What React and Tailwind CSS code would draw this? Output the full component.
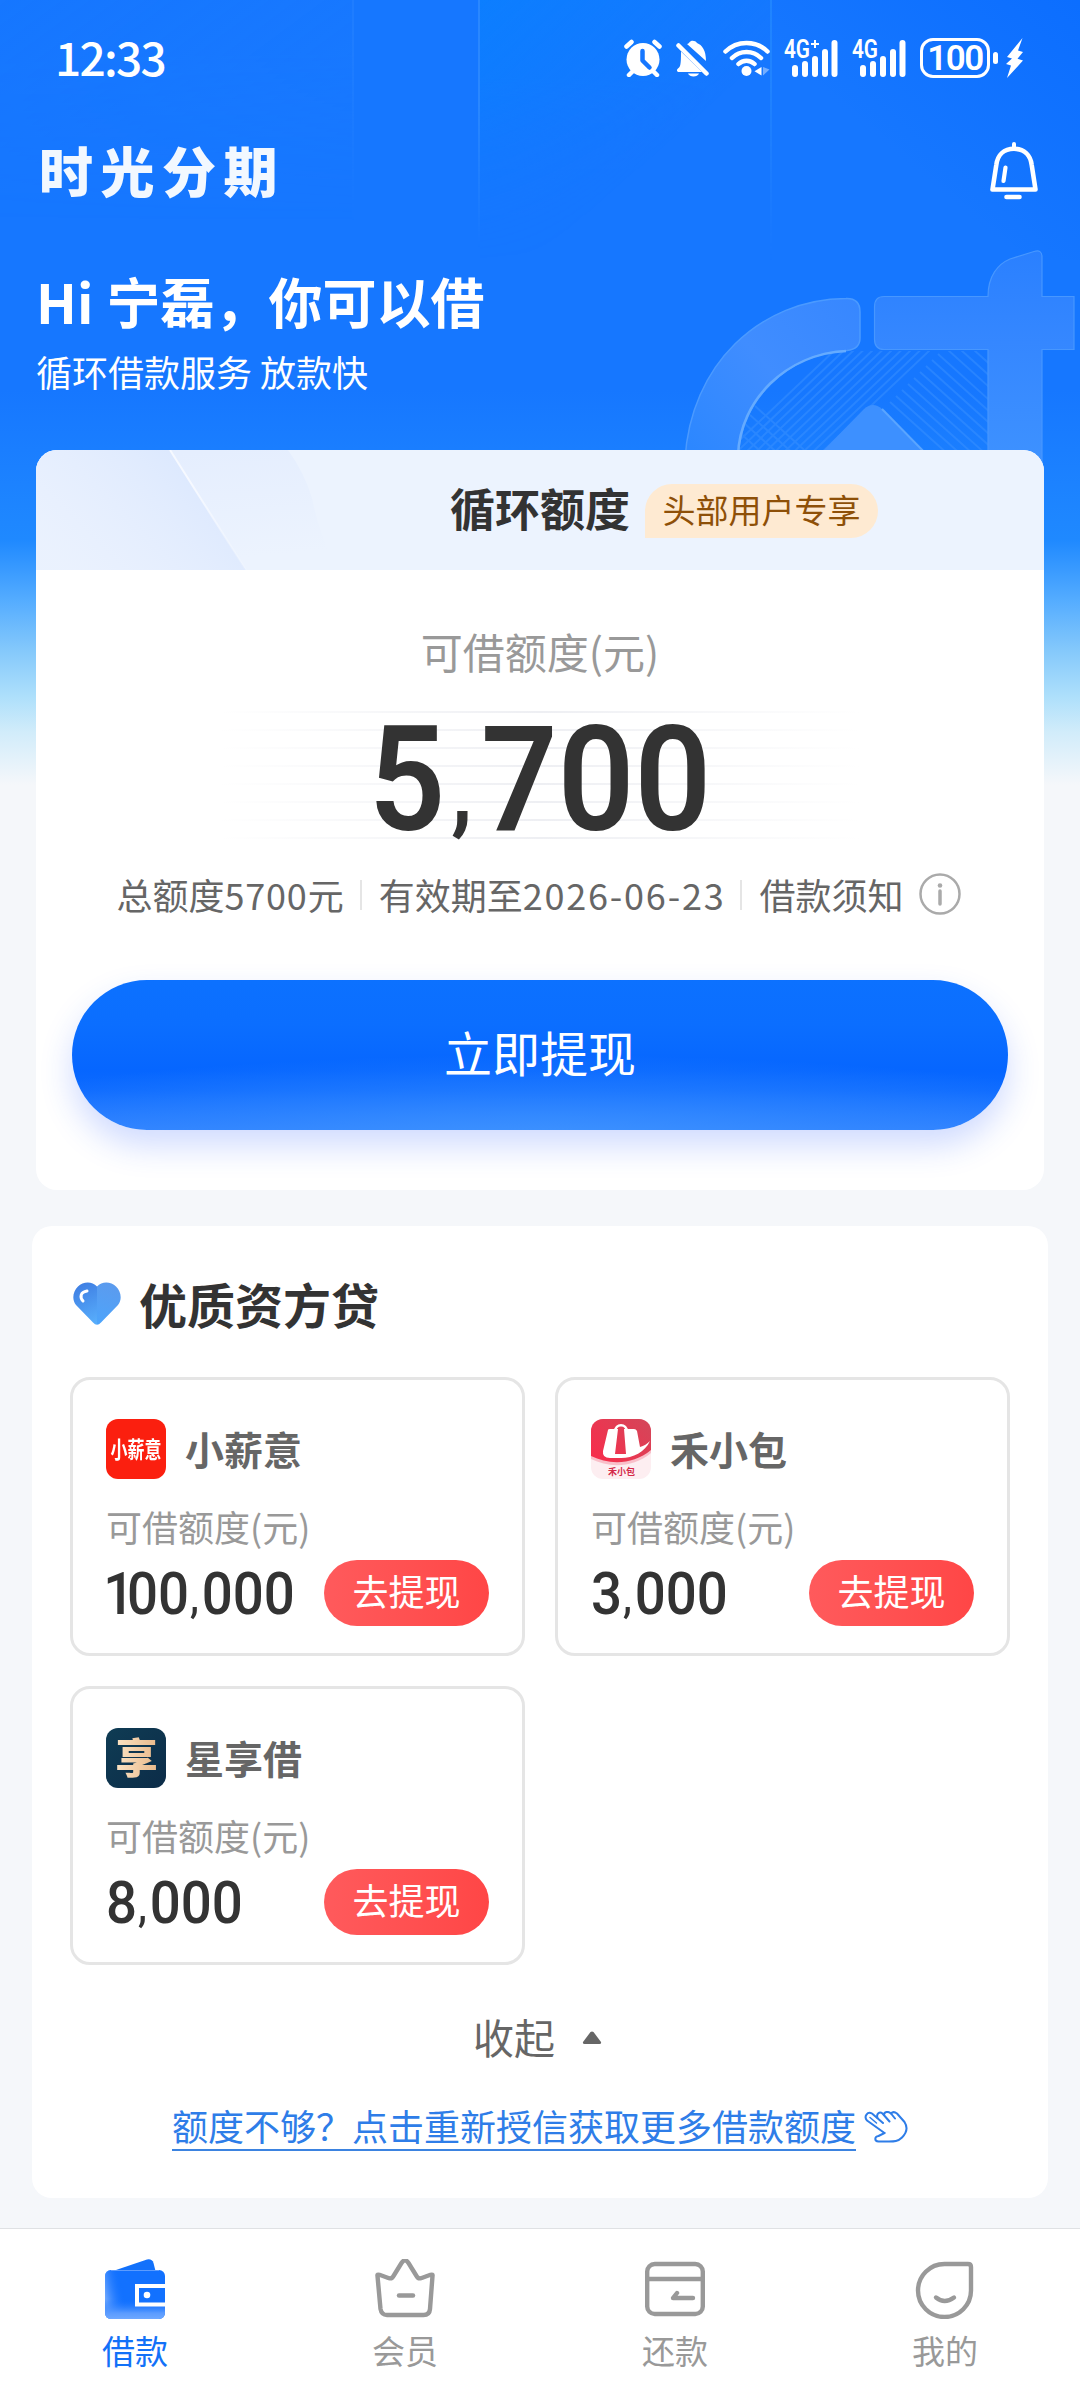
const LENDERS = [
  { id: "xxy", name: "小薪意", amount: "100,000", Logo: XiaoxinyiLogo },
  { id: "hxb", name: "禾小包", amount: "3,000", Logo: HexiaobaoLogo },
  { id: "xxj", name: "星享借", amount: "8,000", Logo: XingxiangjieLogo },
];

const TABS = [
  { label: "借款", Icon: WalletIcon, active: true },
  { label: "会员", Icon: CrownIcon },
  { label: "还款", Icon: RepayIcon },
  { label: "我的", Icon: FaceIcon },
];

// ---------- status bar ----------

function AlarmIcon() {
  return (
    <svg width="38" height="38" viewBox="0 0 38 38" fill="none">
      <circle cx="19" cy="20.5" r="16.5" fill="#fff" />
      <path d="M2.5 7.5 7.5 3M35.5 7.5 30.5 3M5 36l4-4M33 36l-4-4" stroke="#fff" strokeWidth="4.5" strokeLinecap="round" />
      <path d="M18.5 12v9.5l7 7" stroke="#1677ff" strokeWidth="4.5" strokeLinecap="round" strokeLinejoin="round" />
    </svg>
  );
}

function BellOffIcon() {
  return (
    <svg width="33" height="38" viewBox="0 0 33 38" fill="none">
      <path d="M11 5c1.5-.6 2-1 2.5-1.8C14.5 1 19.5 1 21 4c5 2 9 7 9 18z" fill="#fff" />
      <path d="M5 12.5 26 33H3c-2.5 0-2.5-2.5-1-3.5 2.5-1.8 3-4 3-17z" fill="#fff" />
      <path d="M12 34.5h11c-1.5 4-9.5 4-11 0z" fill="#fff" />
      <path d="M2.5 6.5 30.5 34.5" stroke="#fff" strokeWidth="4.5" strokeLinecap="round" />
    </svg>
  );
}

function WifiIcon() {
  return (
    <svg width="47" height="38" viewBox="0 0 47 38" fill="none">
      <path d="M2.5 12.5C14 1 33 1 44.5 12.5" stroke="#fff" strokeWidth="4.5" strokeLinecap="round" />
      <path d="M9 19c8-8 21-8 29 0M15.5 25c4.5-4.5 11.5-4.5 16 0" stroke="#fff" strokeWidth="4.5" strokeLinecap="round" />
      <circle cx="23.5" cy="32" r="5" fill="#fff" />
      <path d="M38.5 28v8.5l-7-4.3z" fill="#fff" />
      <path d="M40 28v8.5l6.5-6z" fill="#fff" opacity=".4" />
    </svg>
  );
}

function Signal({ plus }) {
  return (
    <svg className="overflow-visible" width="54" height="38" viewBox="0 0 54 38" fill="#fff">
      <text x="0" y="19" fontFamily="Roboto, sans-serif" fontWeight="600" fontSize="25" textLength="26" lengthAdjust="spacingAndGlyphs">
        4G
      </text>
      {plus && <path d="M30 1h2v3h3v2h-3v3h-2V6h-3V4h3z" />}
      <rect x="8" y="26" width="6" height="12" rx="3" />
      <rect x="18" y="22" width="6" height="16" rx="3" />
      <rect x="28" y="17" width="6" height="21" rx="3" />
      <rect x="38" y="10" width="6" height="28" rx="3" />
      <rect x="47.5" y="1" width="6" height="37" rx="3" />
    </svg>
  );
}

function Battery() {
  return (
    <div className="flex items-center gap-[3px]">
      <div className="flex h-10 w-[70px] items-center justify-center rounded-[13px] border-[3px] border-white font-['Roboto',sans-serif] text-[35px] leading-none font-semibold tracking-[-1.5px]">
        100
      </div>
      <div className="h-3 w-[5px] rounded-full bg-white" />
      <svg className="ml-[5px]" width="17" height="40" viewBox="0 0 17 40" fill="#fff">
        <path d="M16.5 0 1 19l5 1.5L0 26l5 1.5L1 40l16-17.5-5.5-1.8L17 14l-5-1.5z" />
      </svg>
    </div>
  );
}

function StatusBar() {
  return (
    <div className="flex h-[116px] items-center justify-between pr-[57px] pl-[55px]">
      <span className="pb-[5px] font-['Noto_Sans_CJK_SC',sans-serif] text-[46px] leading-none font-medium tracking-[-1.7px]">12:33</span>
      <div className="flex items-center gap-[14px]">
        <AlarmIcon />
        <BellOffIcon />
        <WifiIcon />
        <Signal plus />
        <Signal />
        <Battery />
      </div>
    </div>
  );
}

// ---------- header ----------

function NoticeIcon() {
  return (
    <svg width="48" height="58" viewBox="0 0 48 58" fill="none" stroke="#fff" strokeLinecap="round" strokeLinejoin="round">
      <path d="M24 2v4" strokeWidth="4" />
      <path d="M24 6.8C14 6.8 7.5 13 6.3 23L2.5 47.5h43L41.7 23C40.5 13 34 6.8 24 6.8z" strokeWidth="4.6" />
      <path d="M15.5 25.5 13.5 39" strokeWidth="4.2" />
      <path d="M16.5 55h13" strokeWidth="4.6" />
    </svg>
  );
}

function HeaderBackdrop() {
  // hatching inside the bowl: rises up to the ridge line, falls to the right of it
  const rising = Array.from({ length: 11 }, (_, i) => 930 - i * 9.5);
  const ridge = Array.from({ length: 9 }, (_, i) => i * 6);
  return (
    <div className="absolute inset-x-0 top-0 h-[790px] bg-[linear-gradient(180deg,#1677ff_0px,#1677ff_390px,#1a7eff_450px,#1f89ff_540px,#54acff_600px,#82c7fb_648px,#afe0fb_698px,#d1ecfa_732px,#f5f7fa_785px)]">
      <div className="flex h-[260px]">
        <div className="w-[354px] border-r-2 border-[#2c86ff]/40 bg-linear-to-br from-transparent to-[#2584ff]/20 mask-b-from-20% mask-b-to-85%" />
        <div className="w-[126px] border-r-2 border-[#3d97ff]/50 mask-b-from-40% mask-b-to-95%" />
        <div className="w-[292px] border-r-2 border-[#338cff]/50 bg-linear-to-br from-[#0a80ff]/80 to-transparent to-60% mask-b-from-30% mask-b-to-100%" />
        <div className="flex-1 bg-linear-to-bl from-[#0568ff]/60 to-transparent to-60%" />
      </div>
      <svg className="absolute top-0 left-0" width="1080" height="560" viewBox="0 0 1080 560" fill="none">
        <defs>
          <clipPath id="bowl">
            <path d="M738 460A112 110 0 0 1 850 351H988V460z" />
          </clipPath>
          <linearGradient id="arc" x1="860" y1="300" x2="690" y2="450" gradientUnits="userSpaceOnUse">
            <stop stopColor="#3787ff" />
            <stop offset=".5" stopColor="#408dff" />
            <stop offset="1" stopColor="#2c87ff" />
          </linearGradient>
          <linearGradient id="stem" x1="0" y1="250" x2="0" y2="480" gradientUnits="userSpaceOnUse">
            <stop stopColor="#2a80ff" />
            <stop offset=".4" stopColor="#3587ff" />
            <stop offset="1" stopColor="#3f93ff" />
          </linearGradient>
        </defs>
        <g clipPath="url(#bowl)" stroke="#3b91ff" strokeWidth="2" opacity=".5">
          {rising.map((x) => (
            <path key={x} d={`M${x} 350l-110 104`} />
          ))}
          {ridge.map((d) => (
            <path key={d} d={`M${938 - d} ${354 + d}l120 108`} />
          ))}
          {[0, 1, 2].map((n) => (
            <path key={n} d={`M${948 + n * 13} 350l80 72`} />
          ))}
          {[0, 1, 2, 3].map((n) => (
            <path key={n} d={`M${755 - n * 5} ${406 + n * 9}l56 50`} />
          ))}
        </g>
        <path d="M685 460C690 365 760 299 846 298.5Q860 298 860 312V338Q860 349 847 350.5C786 354 740 400 738 460z" fill="url(#arc)" stroke="#4b9aff" strokeWidth="1.5" />
        <path d="M846 351C786 354 740 400 738 455" stroke="#65abff" strokeWidth="2.5" />
        <path d="M884 296.5H988C988 276 998 264 1010 259L1034 251.5Q1042 249 1042 257V296.5H1074V349.5H1042V480H988V349.5H884Q874.5 349.5 874.5 339V307Q874.5 296.5 884 296.5z" fill="url(#stem)" stroke="#4797ff" strokeWidth="1.2" />
        <path d="M814 460 864 409Q873 401 882 409L932 460z" fill="#3d90ff" />
        <path d="M882 409 932 460" stroke="#5aa5ff" strokeWidth="2" />
      </svg>
    </div>
  );
}

// ---------- credit card ----------

function InfoIcon() {
  return (
    <svg width="42" height="42" viewBox="0 0 42 42" fill="none">
      <circle cx="21" cy="21" r="19.5" stroke="#aaa" strokeWidth="2.5" />
      <circle cx="21" cy="12.5" r="2.3" fill="#aaa" />
      <path d="M21 18v13" stroke="#aaa" strokeWidth="3.5" strokeLinecap="round" />
    </svg>
  );
}

function CreditCard() {
  return (
    <section className="mx-9 mt-[50px] h-[740px] overflow-hidden rounded-[21px] bg-white">
      <div className="relative grid h-[120px] grid-cols-[1fr_auto_1fr] items-center bg-[#ecf3fe]">
        <svg className="absolute top-0 left-0" width="320" height="120" viewBox="0 0 320 120">
          <defs>
            <linearGradient id="facetA" x1="20" y1="110" x2="130" y2="0" gradientUnits="userSpaceOnUse">
              <stop stopColor="#e6eefe" stopOpacity=".3" />
              <stop offset="1" stopColor="#dde9fe" />
            </linearGradient>
            <linearGradient id="facetB" x1="190" y1="0" x2="200" y2="120" gradientUnits="userSpaceOnUse">
              <stop stopColor="#e5eefe" />
              <stop offset=".9" stopColor="#ecf3fe" />
            </linearGradient>
            <linearGradient id="facetEdge" x1="134" y1="0" x2="210" y2="120" gradientUnits="userSpaceOnUse">
              <stop offset=".3" stopColor="#f6f9ff" />
              <stop offset="1" stopColor="#f6f9ff" stopOpacity=".2" />
            </linearGradient>
          </defs>
          <path d="M0 0H134L210 120H0z" fill="url(#facetA)" />
          <path d="M134 0H252Q268 22 276 48Q282 80 300 120H210z" fill="url(#facetB)" />
          <path d="M134 0 210 120" stroke="url(#facetEdge)" strokeWidth="2" />
        </svg>
        <span />
        <h2 className="relative pb-[6px] text-[45px] leading-none font-bold">循环额度</h2>
        <span className="relative mt-[2px] ml-[15px] flex h-[54px] w-[233px] items-center justify-center justify-self-start rounded-[27px] rounded-bl-none bg-[#feead2] pb-[3px] text-[33px] leading-none text-[#8e5008]">
          头部用户专享
        </span>
      </div>

      <p className="mt-[51px] text-center text-[42px] leading-[60px] text-[#999]">可借额度(元)</p>

      <div className="relative mx-auto mt-[22px] h-[150px] w-[640px]">
        <div className="absolute inset-x-0 top-[8px] flex flex-col gap-4">
          {[0, 1, 2, 3, 4, 5, 6, 7].map((n) => (
            <div key={n} className="h-[2px] bg-linear-to-r from-transparent via-[#eeeff3] to-transparent" />
          ))}
        </div>
        <div className="relative top-[3px] flex origin-center scale-x-[.92] justify-center font-['Roboto',sans-serif] text-[146px] leading-[150px] font-semibold">
          <span>5</span>
          <span className="translate-y-[8px] pr-[9px] pl-[6px] text-[100px]">,</span>
          <span>700</span>
        </div>
      </div>

      <div className="mt-[14px] flex h-[54px] items-center justify-center pr-[3px] text-[36px] leading-[54px] text-[#666]">
        <span>
          总额度<span className="tracking-[.8px]">5700</span>元
        </span>
        <i className="mt-[2px] mr-[17px] ml-[16px] h-[30px] w-[2px] bg-[#e5e5e5]" />
        <span>
          有效期至<span className="tracking-[1.8px]">2026-06-23</span>
        </span>
        <i className="mt-[2px] mr-[17px] ml-[15px] h-[30px] w-[2px] bg-[#e5e5e5]" />
        <span className="mr-[15px]">借款须知</span>
        <InfoIcon />
      </div>

      <button className="mx-9 mt-[59px] flex h-[150px] w-[936px] items-center justify-center rounded-full bg-[radial-gradient(ellipse_70%_55%_at_50%_105%,rgba(64,150,255,.8)_0%,rgba(56,143,255,.45)_50%,rgba(50,140,255,0)_100%),linear-gradient(180deg,#0c71ff_0%,#0b6eff_30%,#0666ff_60%,#0d6aff_74%,#2f80ff_100%)] pb-[9px] text-[48px] leading-none text-white shadow-[0_16px_32px_rgba(40,90,255,0.22)]">
        立即提现
      </button>
    </section>
  );
}

// ---------- lenders ----------

function HeartIcon() {
  return (
    <svg width="50" height="46" viewBox="0 0 50 46" fill="none">
      <defs>
        <linearGradient id="heartL" x1="6" y1="4" x2="24" y2="42" gradientUnits="userSpaceOnUse">
          <stop stopColor="#3f7fe3" />
          <stop offset="1" stopColor="#58aefc" />
        </linearGradient>
        <linearGradient id="heartR" x1="40" y1="4" x2="26" y2="42" gradientUnits="userSpaceOnUse">
          <stop stopColor="#5b9bee" />
          <stop offset="1" stopColor="#4da4fb" />
        </linearGradient>
      </defs>
      <path d="M25 5.5C20 0 11 .5 6 5.5S-.5 18 4 24L21 41.5Q23 43.8 25 43.8z" fill="url(#heartL)" />
      <path d="M25 5.5C30 0 39 .5 44 5.5S50.5 18 46 24L29 41.5Q27 43.8 25 43.8z" fill="url(#heartR)" />
      <path d="M15 10C8.5 11 7.5 16 11 20" stroke="#fff" strokeWidth="3" strokeLinecap="round" />
    </svg>
  );
}

function XiaoxinyiLogo() {
  return (
    <div className="flex size-[60px] items-center justify-center rounded-[12px] bg-[#fb1f0f]">
      <span className="scale-y-[1.35] pb-[2px] text-[17px] leading-none font-bold text-white">小薪意</span>
    </div>
  );
}

function HexiaobaoLogo() {
  return (
    <svg className="rounded-[12px]" width="60" height="60" viewBox="0 0 60 60">
      <defs>
        <linearGradient id="bagBg" x1="60" y1="0" x2="10" y2="45" gradientUnits="userSpaceOnUse">
          <stop stopColor="#d3475a" />
          <stop offset="1" stopColor="#f62e4c" />
        </linearGradient>
      </defs>
      <rect width="60" height="60" fill="#fdeef1" />
      <path d="M0 0H60V34C42 49 18 49 0 40z" fill="#f9bfc9" />
      <path d="M0 0H60V31C42 46 18 46 0 37z" fill="url(#bagBg)" />
      <path d="M17 11Q17 10 19 10H27L24 35H35L33 10H43Q45 10 46 12L49 28C53 27 56 25 59 22C54 33 42 39 30 39H19Q11 39 12 32z" fill="#fff" />
      <path d="M24 13C24 4 36 4 36 13" fill="none" stroke="#fff" strokeWidth="2.5" />
      <text x="30.5" y="56" textAnchor="middle" fontFamily="'Noto Sans CJK SC', sans-serif" fontSize="9" fontWeight="700" fill="#d42a4a">
        禾小包
      </text>
    </svg>
  );
}

function XingxiangjieLogo() {
  return (
    <div className="flex size-[60px] items-center justify-center rounded-[12px] bg-linear-to-br from-[#0f3c54] to-[#0c2c48]">
      <span className="scale-x-[1.04] bg-linear-to-r from-[#fbe3c4] to-[#e9b98a] bg-clip-text pb-[5px] text-[41px] leading-none font-black text-transparent">享</span>
    </div>
  );
}

function Amount({ value }) {
  return (
    <span className="relative top-px flex w-0 origin-left scale-x-[.91] font-['Roboto',sans-serif] text-[60px] leading-[66px] font-medium whitespace-nowrap">
      {value.split("").map((ch, i) => {
        if (ch === ",") {
          return (
            <span key={i} className="translate-y-[3px] pr-[3px] pl-px text-[44px]">
              ,
            </span>
          );
        }
        // the "1" sits tighter than the other figures
        return (
          <span key={i} className={ch === "1" ? "-ml-[3px] tracking-[-8px]" : undefined}>
            {ch}
          </span>
        );
      })}
    </span>
  );
}

function LenderCard({ name, amount, Logo }) {
  return (
    <div className="h-[279px] rounded-[20px] border-[3px] border-[#e5e5e5] px-[33px] pt-[39px]">
      <div className="flex h-[60px] items-center gap-[19px]">
        <Logo />
        <span className="pb-[3px] text-[39px] leading-[56px] font-bold text-[#666]">{name}</span>
      </div>
      <p className="mt-[23px] text-[36px] leading-[48px] text-[#999]">可借额度(元)</p>
      <div className="mt-[10px] flex items-center justify-between">
        <Amount value={amount} />
        <button className="flex h-[66px] w-[165px] items-center justify-center rounded-full bg-linear-to-r from-[#ff5a5c] to-[#ff4646] pb-[6px] text-[36px] leading-none text-white">
          去提现
        </button>
      </div>
    </div>
  );
}

function HandIcon() {
  return (
    <svg width="44" height="32" viewBox="0 0 44 32" fill="none" stroke="#2e7de8" strokeWidth="2" strokeLinecap="round" strokeLinejoin="round">
      <path d="M20.5 22 3 9.5C-.5 5.5 3.5 0 8 2.5L19 12" />
      <path d="M13.5 7C12 3 15.5 0 18.5 2.5L25.5 10.5" />
      <path d="M20 4C20 .5 24 0 27 2.5L31 7.5" />
      <path d="M27 2.5C28.5.8 31 1 33 2.5L40.5 11C44 16.5 42.5 22 38 26.5 34 30.5 30 30.5 25 30.5H14.5C10 30 10.5 25.5 14.5 25L20.5 22" />
      <path d="M6 6.5 12.5 12" strokeWidth="1.5" />
    </svg>
  );
}

function LenderSection() {
  return (
    <section className="mx-8 mt-9 h-[972px] rounded-[20px] bg-white px-[38px] pt-[42px]">
      <div className="flex h-[72px] items-center pl-[2px]">
        <HeartIcon />
        <h2 className="ml-[17px] pb-[3px] text-[48px] leading-none font-bold">优质资方贷</h2>
      </div>
      <div className="mt-[37px] grid grid-cols-2 gap-[30px]">
        {LENDERS.map((l) => (
          <LenderCard key={l.id} {...l} />
        ))}
      </div>
      <div className="mt-[41px] flex h-[60px] items-center justify-center pr-[5px] text-[41px] leading-[60px] text-[#666]">
        收起
        <svg className="mt-[2px] ml-[27px]" width="20" height="13" viewBox="0 0 20 13">
          <path d="M8.5 1Q10 0 11.5 1L19 11Q19.5 13 17.5 13H2.5Q.5 13 1 11z" fill="#666" />
        </svg>
      </div>
      <div className="mt-[35px] flex justify-center gap-2">
        <a className="border-b-2 border-[#3b83e0] text-[36px] leading-[48px] text-[#2e7de8]">额度不够？点击重新授信获取更多借款额度</a>
        <div className="pt-[10px]">
          <HandIcon />
        </div>
      </div>
    </section>
  );
}

// ---------- tab bar ----------

function WalletIcon() {
  return (
    <svg width="60" height="60" viewBox="0 0 60 60">
      <defs>
        <linearGradient id="walletSide" x1="0" y1="36" x2="18" y2="32" gradientUnits="userSpaceOnUse">
          <stop stopColor="#6aa5ff" />
          <stop offset="1" stopColor="#1271ff" stopOpacity="0" />
        </linearGradient>
        <linearGradient id="walletFoot" x1="0" y1="60" x2="0" y2="40" gradientUnits="userSpaceOnUse">
          <stop stopColor="#6ea8ff" />
          <stop offset=".3" stopColor="#5a9bff" />
          <stop offset="1" stopColor="#1271ff" stopOpacity="0" />
        </linearGradient>
      </defs>
      <path d="M8 12 42 .5Q47-.5 48.5 4L51 14H8z" fill="#1271fb" />
      <rect y="11" width="60" height="49" rx="6" fill="#1271ff" />
      <rect y="11" width="60" height="49" rx="6" fill="url(#walletSide)" />
      <rect y="11" width="60" height="49" rx="6" fill="url(#walletFoot)" />
      <path d="M6 11.5h48" stroke="#5c9cff" />
      <path d="M60 27H32V45.5H60" fill="none" stroke="#fff" strokeWidth="4" />
      <circle cx="42" cy="36" r="3.3" fill="#fff" />
    </svg>
  );
}

function CrownIcon() {
  return (
    <svg width="60" height="60" viewBox="0 0 60 60" fill="none" stroke="#999" strokeWidth="4.4" strokeLinecap="round" strokeLinejoin="round">
      <path d="M2.5 17Q2 15 4.5 15.8L14 19.2Q17 20 18.5 17L26.5 4Q30-1.5 33.5 4L41.5 17Q43 20 46 19.2L55.5 15.8Q58 15 57.5 17L55 50Q54.5 56 48.5 56H12Q6.5 56 5.5 50z" />
      <path d="M24 36.5h14" strokeWidth="4.5" />
    </svg>
  );
}

function RepayIcon() {
  return (
    <svg width="60" height="60" viewBox="0 0 60 60" fill="none" stroke="#999" strokeWidth="4.4" strokeLinecap="round" strokeLinejoin="round">
      <rect x="2.2" y="5" width="55.6" height="50" rx="7.5" />
      <path d="M2 20h56M48 39H28L32 34" />
    </svg>
  );
}

function FaceIcon() {
  return (
    <svg width="60" height="60" viewBox="0 0 60 60" fill="none" stroke="#999" strokeWidth="4.4" strokeLinecap="round">
      <path d="M29.5 5H53Q56 5 56 8V31.5A26.5 26.5 0 1 1 29.5 5z" />
      <path d="M21 38.5Q29.5 45.5 39 38.5" />
    </svg>
  );
}

function TabBar() {
  return (
    <nav className="mt-[30px] grid h-[160px] grid-cols-4 border-t border-[#dfe1e4] bg-white pt-[30px]">
      {TABS.map(({ label, Icon, active }) => (
        <div key={label} className="flex flex-col items-center">
          <Icon />
          <span className={`mt-[7px] text-[33px] leading-[48px] ${active ? "text-[#1271f8]" : "text-[#999]"}`}>{label}</span>
        </div>
      ))}
    </nav>
  );
}

export default function App() {
  return (
    <div className="relative h-[2388px] w-[1080px] overflow-hidden bg-[#f5f7fa] font-['Noto_Sans_CJK_SC',sans-serif] text-[#333]">
      <HeaderBackdrop />
      <div className="relative">
        <header className="text-white">
          <StatusBar />
          <div className="flex h-[110px] items-center justify-between pr-[42px] pl-[39px]">
            <h1 className="pb-[3px] text-[54px] leading-none font-black tracking-[7.5px] text-[#f2f8ff]">时光分期</h1>
            <NoticeIcon />
          </div>
          <p className="mt-[39px] pl-9 text-[54px] leading-[72px] font-bold [word-spacing:1px]">Hi 宁磊，你可以借</p>
          <p className="mt-[6px] pl-9 text-[36px] leading-[57px]">循环借款服务 放款快</p>
        </header>
        <CreditCard />
        <LenderSection />
        <TabBar />
      </div>
    </div>
  );
}
